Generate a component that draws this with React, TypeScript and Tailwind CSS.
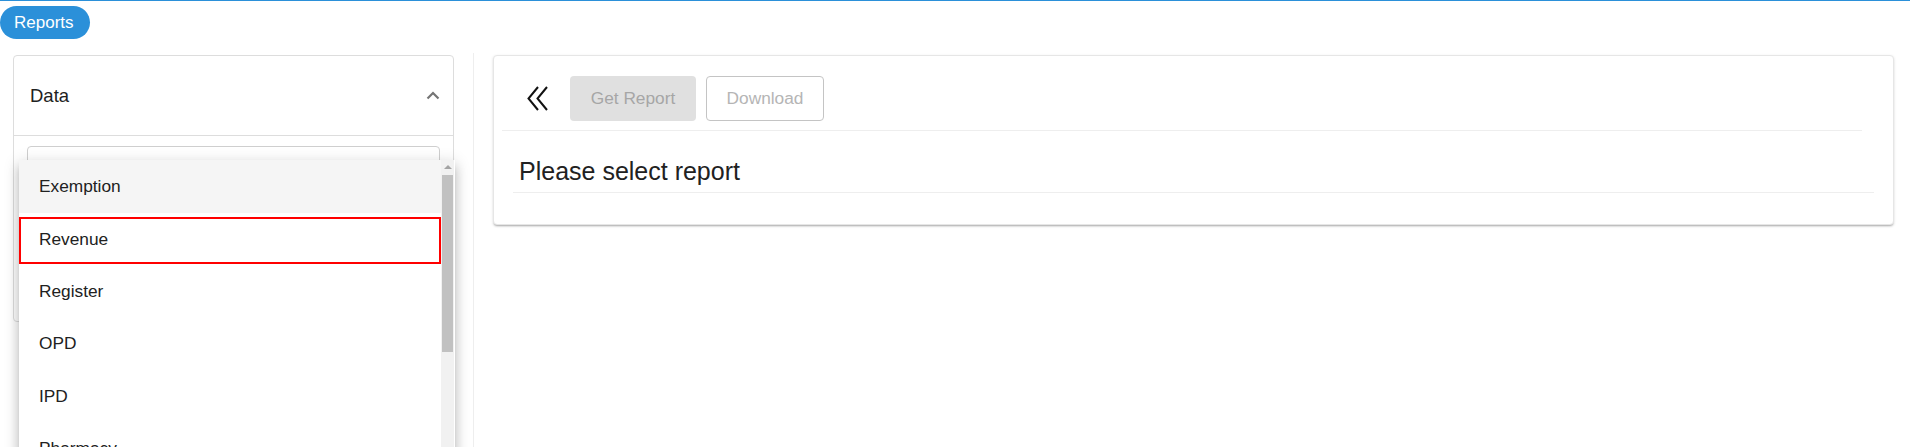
import React from "react";

const items = ["Exemption", "Revenue", "Register", "OPD", "IPD", "Pharmacy", "Laboratory"];

const ChevronUp = () => (
  <svg width="14" height="9" viewBox="0 0 14 9" fill="none">
    <path d="M1.5 7.5 L7 2 L12.5 7.5" stroke="#757575" strokeWidth="2.2" />
  </svg>
);

const DoubleLeft = () => (
  <svg width="22" height="25" viewBox="0 0 22 25" fill="none">
    <path d="M11 1 L1.5 12.5 L11 24" stroke="#111" strokeWidth="2" />
    <path d="M20 1 L10.5 12.5 L20 24" stroke="#111" strokeWidth="2" />
  </svg>
);

const DropdownMenu = () => (
  <div className="absolute left-[5px] top-[24px] w-[436px] h-[300px] bg-white flex shadow-[0_5px_5px_-3px_rgba(0,0,0,0.2),0_8px_10px_1px_rgba(0,0,0,0.14),0_3px_14px_2px_rgba(0,0,0,0.12)] z-20">
    <div className="w-[422px] flex flex-col">
      {items.map((item, i) => (
        <div
          key={item}
          className={
            i === 0
              ? "h-[53px] shrink-0 flex items-center pl-[20px] bg-[#f5f5f5] text-[17.3px] text-[#212121]"
              : "h-[52.5px] shrink-0 flex items-center text-[17.3px] text-[#212121]"
          }
        >
          {i === 1 ? (
            <div className="relative z-10 w-[424px] h-[47px] mt-[2px] border-2 border-[#ff0000] flex items-center pl-[18px]">
              {item}
            </div>
          ) : (
            <span className={i === 0 ? "" : "pl-[20px]"}>{item}</span>
          )}
        </div>
      ))}
    </div>
    <div className="w-[13px] bg-[#f1f1f1] flex flex-col items-center">
      <div className="mt-[5px] w-0 h-0 border-l-[4px] border-r-[4px] border-b-[4px] border-l-transparent border-r-transparent border-b-[#a3a3a3]" />
      <div className="mt-[6px] w-[11px] h-[177px] bg-[#c1c1c1]" />
    </div>
  </div>
);

export default function App() {
  return (
    <div
      className="w-[1910px] h-[447px] overflow-hidden bg-white border-t border-[#2b90d9]"
      style={{ fontFamily: '"Liberation Sans", Arial, sans-serif' }}
    >
      <div className="mt-[5px] h-[33px] w-[90px] rounded-full bg-[#2b90d9] text-white text-[17px] flex items-center pl-[14px]">
        Reports
      </div>

      <div className="mt-[16px] flex h-[400px]">
        {/* left filter panel */}
        <div className="ml-[13px] w-[441px] relative">
          <div className="h-[267px] border border-[#dddddd] rounded-[4px] bg-white">
            <div className="h-[80px] border-b border-[#dddddd] flex items-center justify-between pl-[16px] pr-[13px]">
              <span className="text-[18.5px] text-[#212121]">Data</span>
              <ChevronUp />
            </div>
            <div className="px-[13px] pt-[10px] relative">
              <div className="h-[46px] border border-[#cfcfcf] rounded-[4px] pl-[12px] pt-[11px] text-[14px] text-[#90caf9]">
                Report Type
              </div>
              <DropdownMenu />
            </div>
          </div>
        </div>

        <div className="ml-[19px] w-px bg-[#eeeeee] -mt-[2px]" />

        {/* report area */}
        <div className="ml-[19px] w-[1401px] h-[170px] rounded-[4px] border border-[#e6e6e6] bg-white shadow-[0_2px_2px_-1px_rgba(0,0,0,0.25),0_1px_3px_0_rgba(0,0,0,0.12)]">
          <div className="mx-[8px] mr-[31px] h-[75px] border-b border-[#eeeeee] flex items-end pb-[9px]">
            <div className="ml-[25px] w-[22px] h-[45px] flex items-center">
              <DoubleLeft />
            </div>
            <button className="ml-[21px] h-[45px] w-[126px] rounded-[4px] bg-[#e0e0e0] text-[#a6a6a6] text-[17.3px]">
              Get Report
            </button>
            <button className="ml-[10px] h-[45px] w-[118px] rounded-[4px] border border-[#c4c4c4] bg-white text-[#b5b5b5] text-[17.3px]">
              Download
            </button>
          </div>
          <div className="mx-[19px] h-[62px] border-b border-[#eeeeee] flex items-end pb-[8px]">
            <span className="pl-[6px] text-[25px] text-[#212121] leading-none">Please select report</span>
          </div>
        </div>
      </div>
    </div>
  );
}
